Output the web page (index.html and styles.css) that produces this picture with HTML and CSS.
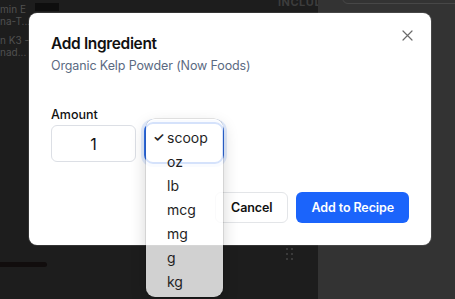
FILE: index.html
```html
<!DOCTYPE html>
<html>
<head>
<meta charset="utf-8">
<link rel="stylesheet" href="styles.css">
</head>
<body>
<div class="page">
  <div class="left-pane">
    <div class="bg-list">
      <div class="bg-item"><span>min E</span><span>na-T...</span></div>
      <div class="bg-item"><span>n K3 -</span><span>nad...</span></div>
    </div>
    <div class="bg-chip"></div>
    <div class="bg-head">INCLUD</div>
    <div class="bg-bar"></div>
    <div class="bg-dots"><i></i><i></i><i></i><i></i><i></i><i></i></div>
  </div>
  <div class="right-pane">
    <div class="bg-box"></div>
  </div>
</div>

<div class="modal">
  <button class="close" aria-label="Close">
    <svg width="11" height="11" viewBox="0 0 11 11"><path d="M1 1L10 10M10 1L1 10" stroke="#6b6b6b" stroke-width="1.2" fill="none" stroke-linecap="round"/></svg>
  </button>
  <h2 class="title">Add Ingredient</h2>
  <p class="subtitle">Organic Kelp Powder (Now Foods)</p>
  <label class="label">Amount</label>
  <div class="amount-row">
    <div class="amount-input">1</div>
    <div class="unit-select"></div>
  </div>
  <div class="actions">
    <button class="btn btn-cancel">Cancel</button>
    <button class="btn btn-primary">Add to Recipe</button>
  </div>
</div>

<div class="popup">
  <div class="opt selected"><span class="check">✓</span>scoop</div>
  <div class="opt">oz</div>
  <div class="opt">lb</div>
  <div class="opt">mcg</div>
  <div class="opt">mg</div>
  <div class="opt">g</div>
  <div class="opt">kg</div>
</div>
</body>
</html>
```

FILE: styles.css
```css
* { box-sizing: border-box; }
html, body { margin: 0; padding: 0; }
body {
  width: 455px;
  height: 299px;
  overflow: hidden;
  font-family: Inter, "Liberation Sans", sans-serif;
  background: #1d1d1d;
  position: relative;
}
.page {
  display: flex;
  height: 299px;
}
.left-pane {
  width: 318px;
  background: #1d1d1d;
  position: relative;
}
.right-pane {
  flex: 1;
  background: #333333;
  position: relative;
}
.bg-box {
  position: absolute;
  left: 24px;
  top: -10px;
  right: -10px;
  height: 14px;
  border: 1px solid #474747;
  border-radius: 6px;
}
.bg-list {
  position: absolute;
  left: 0;
  top: 3px;
  font-size: 10px;
  line-height: 12px;
  color: #505050;
}
.bg-item { display: flex; flex-direction: column; margin-bottom: 7px; }
.bg-chip {
  position: absolute;
  left: 35px; top: 3px;
  width: 24px; height: 8px;
  background: #0e0e0e;
}
.bg-head {
  position: absolute;
  left: 278px; top: -5px;
  font-size: 11px;
  font-weight: 700;
  color: #3c3c3c;
  letter-spacing: 0.5px;
}
.bg-bar {
  position: absolute;
  left: -5px; top: 262px;
  width: 52px; height: 5px;
  border-radius: 3px;
  background: #110d0d;
}
.bg-dots {
  position: absolute;
  left: 286px; top: 248px;
  width: 7px;
  display: grid;
  grid-template-columns: 2px 2px;
  column-gap: 3px;
  row-gap: 3px;
}
.bg-dots i { width: 2px; height: 2px; background: #3a3a3a; display: block; }

.modal {
  position: absolute;
  left: 29px;
  top: 13px;
  width: 402px;
  height: 232px;
  background: #ffffff;
  border-radius: 8px;
  padding: 19px 22px 22px;
  box-shadow: 0 0 0 1px rgba(255,255,255,0.1);
  display: flex;
  flex-direction: column;
}
.close {
  position: absolute;
  right: 18px;
  top: 17px;
  width: 11px; height: 11px;
  padding: 0; border: 0; background: none;
  display: flex;
}
.title {
  margin: 0;
  font-size: 15.5px;
  line-height: 24px;
  font-weight: 600;
  color: #111;
  letter-spacing: -0.35px;
}
.subtitle {
  margin: 0;
  font-size: 12.5px;
  line-height: 20px;
  color: #5b6a82;
  letter-spacing: -0.12px;
}
.label {
  margin-top: 29px;
  font-size: 12.5px;
  line-height: 20px;
  font-weight: 500;
  color: #111;
}
.amount-row {
  display: flex;
  gap: 8px;
}
.amount-input {
  width: 85px;
  height: 37px;
  border: 1px solid #dcdfe5;
  border-radius: 6px;
  display: flex;
  align-items: center;
  justify-content: center;
  font-size: 16px;
  color: #111;
}
.unit-select {
  width: 80px;
  height: 42px;
  margin-top: -3px;
  border: 2px solid #2f6fe8;
  border-radius: 9px;
  box-shadow: 0 0 0 3px rgba(59,130,246,0.15);
}
.actions {
  margin-top: auto;
  display: flex;
  justify-content: flex-end;
  gap: 8px;
}
.btn {
  height: 31px;
  border-radius: 6px;
  font-family: inherit;
  font-size: 12.5px;
  font-weight: 600;
  padding: 0 15px;
  letter-spacing: -0.1px;
}
.btn-cancel {
  background: #fff;
  border: 1px solid #e3e5e8;
  color: #111;
}
.btn-primary {
  background: #1b64fb;
  border: 0;
  color: #fff;
}

.popup {
  position: absolute;
  left: 146px;
  top: 119px;
  width: 77px;
  height: 178px;
  border-radius: 9px;
  background: rgba(255,255,255,0.8);
  box-shadow: 0 0 0 0.5px rgba(0,0,0,0.18), 0 6px 16px rgba(0,0,0,0.18), inset 0 1px 0 rgba(255,255,255,0.9);
  padding-top: 6px;
  display: flex;
  flex-direction: column;
}
.opt {
  height: 24px;
  display: flex;
  align-items: center;
  padding-left: 21px;
  font-size: 14px;
  color: #1f1f1f;
  position: relative;
}
.check {
  position: absolute;
  left: 7px;
  font-size: 13px;
  font-weight: 600;
}
```
